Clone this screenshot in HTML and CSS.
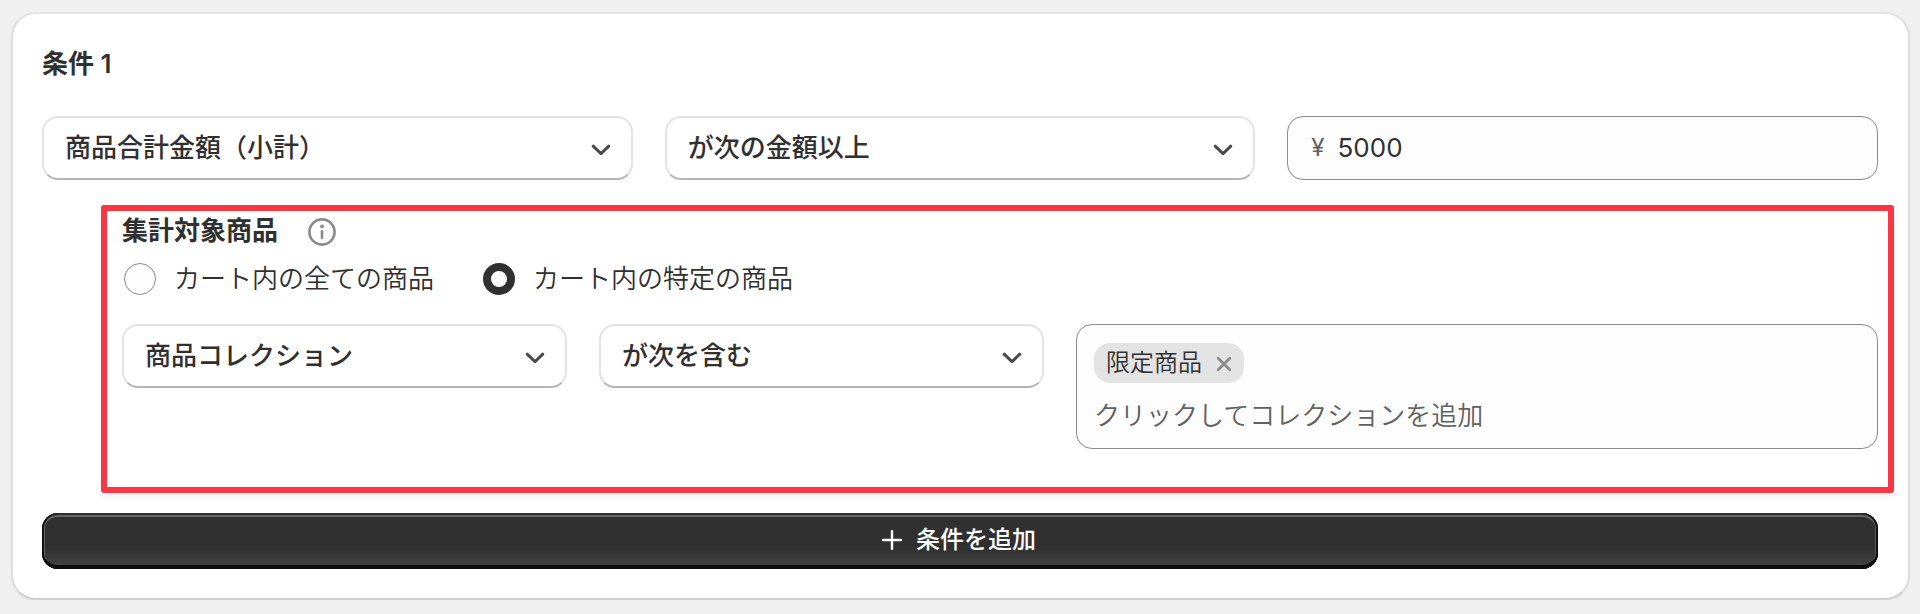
FILE: index.html
```
<!DOCTYPE html>
<html lang="ja">
<head>
    <meta charset="UTF-8">
    <meta name="viewport" content="width=device-width, initial-scale=1.0">
    <title>条件の設定</title>
    <link rel="stylesheet" href="styles.css">
</head>
<body>
    <section class="card">
        <h2 class="card-title">条件 1</h2>

        <div class="row">
            <button type="button" class="select">
                <span>商品合計金額（小計）</span>
                <svg class="chevron" viewBox="0 0 24 24"><path d="M4.2 8.2 12 15.6l7.8-7.4"/></svg>
            </button>
            <button type="button" class="select">
                <span>が次の金額以上</span>
                <svg class="chevron" viewBox="0 0 24 24"><path d="M4.2 8.2 12 15.6l7.8-7.4"/></svg>
            </button>
            <div class="amount">
                <span class="currency">¥</span>
                <span>5000</span>
            </div>
        </div>

        <!-- 集計対象商品 -->
        <div class="target">
            <div class="target-title">
                <span>集計対象商品</span>
                <svg class="info" viewBox="0 0 28 28">
                    <circle cx="14" cy="14" r="12.6"/>
                    <path d="M14 13.2v6.6"/>
                    <circle class="dot" cx="14" cy="8.3" r="1.9"/>
                </svg>
            </div>

            <div class="radios">
                <label class="radio"><span class="radio-mark"></span>カート内の全ての商品</label>
                <label class="radio"><span class="radio-mark checked"></span>カート内の特定の商品</label>
            </div>

            <div class="row target-row">
                <button type="button" class="select">
                    <span>商品コレクション</span>
                    <svg class="chevron" viewBox="0 0 24 24"><path d="M4.2 8.2 12 15.6l7.8-7.4"/></svg>
                </button>
                <button type="button" class="select">
                    <span>が次を含む</span>
                    <svg class="chevron" viewBox="0 0 24 24"><path d="M4.2 8.2 12 15.6l7.8-7.4"/></svg>
                </button>
                <div class="collections">
                    <span class="tag">
                        限定商品
                        <svg class="remove" viewBox="0 0 16 16"><path d="M2.2 2.2l11.6 11.6M13.8 2.2 2.2 13.8"/></svg>
                    </span>
                    <span class="placeholder">クリックしてコレクションを追加</span>
                </div>
            </div>
        </div>

        <button type="button" class="add">
            <svg class="plus" viewBox="0 0 20 20"><path d="M10 1v18M1 10h18"/></svg>
            <span>条件を追加</span>
        </button>
    </section>
</body>
</html>
```
FILE: styles.css
```
* {
    box-sizing: border-box;
}

body {
    margin: 0;
    padding: 12px 10px 0 11px;
    background-color: #f0f0f0;
    color: #303030;
    font-family: Inter, "Noto Sans CJK JP", sans-serif;
    font-size: 26px;
    line-height: 36px;
}

button {
    font: inherit;
    color: inherit;
    margin: 0;
}

svg {
    display: block;
    flex: none;
    fill: none;
    stroke: currentColor;
    stroke-linecap: round;
    stroke-linejoin: round;
}

.card {
    height: 588px;
    padding: 32px 30px 0 29px;
    background-color: #fff;
    border: 2px solid #dedede;
    border-top-color: #e3e3e3;
    border-bottom-color: #d0d0d0;
    border-radius: 25px;
    box-shadow: 0 2px 2px rgba(0, 0, 0, 0.04);
    display: flex;
    flex-direction: column;
}

.card-title {
    margin: 0 0 34px;
    font-size: 26px;
    font-weight: 600;
}

.row {
    display: grid;
    grid-template-columns: repeat(3, 1fr);
    gap: 32px;
    align-items: start;
}

.select {
    height: 64px;
    padding: 0 18px 0 21px;
    display: flex;
    align-items: center;
    justify-content: space-between;
    background-color: #fff;
    border: 2px solid #e3e3e3;
    border-bottom-color: #b5b5b5;
    border-radius: 16px;
    font-weight: 500;
}

.chevron {
    width: 24px;
    height: 24px;
    stroke: #4a4a4a;
    stroke-width: 3;
    margin-top: 4px;
}

.amount {
    height: 64px;
    padding: 0 23px;
    display: flex;
    align-items: center;
    gap: 13px;
    background-color: #fdfdfd;
    border: 1px solid #8a8a8a;
    border-radius: 16px;
}

.currency {
    color: #616161;
    font-size: 24px;
}

/* 赤枠で囲んだ集計対象の設定 */
.target {
    height: 288px;
    margin: 25px -16px 0 59px;
    padding: 2px 10px 0 15px;
    border: 6px solid #f93644;
    border-radius: 3px;
    box-shadow: 0 4px 6px rgba(40, 40, 90, 0.06);
}

.target-title {
    display: flex;
    align-items: center;
    gap: 30px;
    font-weight: 600;
}

.info {
    width: 28px;
    height: 28px;
    color: #8a8a8a;
    stroke-width: 2.6;
    margin-top: 1px;
}

.info .dot {
    fill: currentColor;
    stroke: none;
}

.radios {
    display: flex;
    gap: 49px;
    margin: 12px 0 27px 2px;
}

.radio {
    display: flex;
    align-items: center;
    gap: 18px;
    font-weight: 350;
}

.radio-mark {
    width: 32px;
    height: 32px;
    border: 1px solid #8a8a8a;
    border-radius: 50%;
    background-color: #fdfdfd;
}

.radio-mark.checked {
    border: 8px solid #303030;
    background-color: #fff;
}

.target-row {
    grid-template-columns: 445px 445px 1fr;
}

.target-row .select {
    padding-bottom: 1px;
}

.collections {
    height: 125px;
    padding: 18px 17px 0;
    display: flex;
    flex-direction: column;
    align-items: flex-start;
    gap: 15px;
    background-color: #fdfdfd;
    border: 1px solid #8a8a8a;
    border-radius: 16px;
}

.tag {
    height: 40px;
    padding: 0 12px 1px 12px;
    display: flex;
    align-items: center;
    gap: 14px;
    background-color: #e3e3e3;
    border-radius: 16px;
    font-size: 24px;
    font-weight: 350;
}

.remove {
    width: 16px;
    height: 16px;
    stroke: #8a8a8a;
    stroke-width: 2.8;
    margin-top: 2px;
}

.placeholder {
    color: #616161;
    font-weight: 350;
}

.add {
    height: 56px;
    margin-top: 20px;
    padding: 0 2px 2px 0;
    display: flex;
    align-items: center;
    justify-content: center;
    gap: 14px;
    background: linear-gradient(#303030 63%, #464646);
    border: 0;
    border-radius: 16px;
    box-shadow: inset 0 -4px 0 #0d0d0d, inset 2px 0 0 #101010, inset -2px 0 0 #101010,
        inset 0 2px 0 #303030, inset 0 4px 0 #666, inset 3px 0 0 #666, inset -3px 0 0 #555;
    color: #fff;
    font-size: 24px;
    font-weight: 500;
}

.plus {
    width: 20px;
    height: 20px;
    stroke-width: 2.4;
}
```
